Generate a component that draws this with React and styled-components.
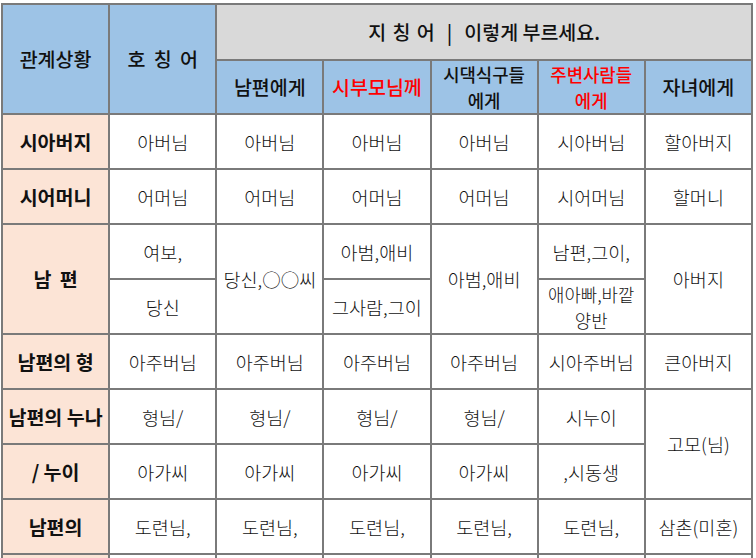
import React from "react";
import styled, { createGlobalStyle } from "styled-components";

const Global = createGlobalStyle`
  html, body { margin: 0; padding: 0; background: #ffffff; }
  body { font-family: "Noto Sans CJK KR", "Noto Sans", sans-serif; }
`;

const Page = styled.div`
  padding: 3px 0 0 1px;
`;

const Table = styled.table`
  border-collapse: collapse;
  table-layout: fixed;
  width: 752px;
`;

const Col = styled.col`
  width: 107px;
`;

const Row = styled.tr`
  height: ${(p) => p.$h || 55}px;
`;

const Cell = styled.td`
  border: 2px solid #7a7a7a;
  padding: 0;
  text-align: center;
  vertical-align: middle;
  font-size: 18.5px;
  line-height: 26px;
  color: #111;
  white-space: nowrap;
  background: ${(p) =>
    p.$tone === "blue" ? "#9dc3e6" : p.$tone === "gray" ? "#d9d9d9" : p.$tone === "peach" ? "#fce4d6" : "#ffffff"};
  font-weight: ${(p) => (p.$bold ? 700 : p.$head ? 500 : 300)};
  ${(p) => (p.$head || p.$bold) && "font-size: 19.5px;"}
  ${(p) => p.$tight && "font-size: 17.8px; line-height: 26px;"}
`;

const Red = styled.span`
  color: #ff0000;
`;

const Gap = styled.span`
  display: inline-block;
  width: ${(p) => p.$w}px;
`;

const rows = [
  ["시아버지", "아버님", "아버님", "아버님", "아버님", "시아버님", "할아버지"],
  ["시어머니", "어머님", "어머님", "어머님", "어머님", "시어머님", "할머니"],
];

export default function App() {
  return (
    <>
      <Global />
      <Page>
        <Table>
          <colgroup>
            {Array.from({ length: 7 }).map((_, i) => (
              <Col key={i} />
            ))}
          </colgroup>
          <tbody>
            <Row $h={56}>
              <Cell $tone="blue" $head rowSpan={2}>관계상황</Cell>
              <Cell $tone="blue" $head rowSpan={2}>
                호<Gap $w={4} /> 칭<Gap $w={4} /> 어
              </Cell>
              <Cell $tone="gray" $head colSpan={5}>
                지<Gap $w={2} /> 칭<Gap $w={2} /> 어<Gap $w={12} />|<Gap $w={12} />이렇게 부르세요.
              </Cell>
            </Row>
            <Row $h={54}>
              <Cell $tone="blue" $head>남편에게</Cell>
              <Cell $tone="blue" $head><Red>시부모님께</Red></Cell>
              <Cell $tone="blue" $head $tight>시댁식구들<br />에게</Cell>
              <Cell $tone="blue" $head $tight><Red>주변사람들<br />에게</Red></Cell>
              <Cell $tone="blue" $head>자녀에게</Cell>
            </Row>
            {rows.map((r) => (
              <Row key={r[0]}>
                <Cell $tone="peach" $bold>{r[0]}</Cell>
                {r.slice(1).map((t, i) => (
                  <Cell key={i}>{t}</Cell>
                ))}
              </Row>
            ))}
            <Row>
              <Cell $tone="peach" $bold rowSpan={2}>남<Gap $w={4} /> 편</Cell>
              <Cell>여보,</Cell>
              <Cell rowSpan={2}>당신,○○씨</Cell>
              <Cell>아범,애비</Cell>
              <Cell rowSpan={2}>아범,애비</Cell>
              <Cell>남편,그이,</Cell>
              <Cell rowSpan={2}>아버지</Cell>
            </Row>
            <Row>
              <Cell>당신</Cell>
              <Cell>그사람,그이</Cell>
              <Cell $tight>애아빠,바깥<br />양반</Cell>
            </Row>
            <Row>
              <Cell $tone="peach" $bold>남편의 형</Cell>
              <Cell>아주버님</Cell>
              <Cell>아주버님</Cell>
              <Cell>아주버님</Cell>
              <Cell>아주버님</Cell>
              <Cell>시아주버님</Cell>
              <Cell>큰아버지</Cell>
            </Row>
            <Row>
              <Cell $tone="peach" $bold>남편의 누나</Cell>
              <Cell>형님/</Cell>
              <Cell>형님/</Cell>
              <Cell>형님/</Cell>
              <Cell>형님/</Cell>
              <Cell>시누이</Cell>
              <Cell rowSpan={2}>고모(님)</Cell>
            </Row>
            <Row>
              <Cell $tone="peach" $bold>/ 누이</Cell>
              <Cell>아가씨</Cell>
              <Cell>아가씨</Cell>
              <Cell>아가씨</Cell>
              <Cell>아가씨</Cell>
              <Cell>,시동생</Cell>
            </Row>
            <Row>
              <Cell $tone="peach" $bold>남편의</Cell>
              <Cell>도련님,</Cell>
              <Cell>도련님,</Cell>
              <Cell>도련님,</Cell>
              <Cell>도련님,</Cell>
              <Cell>도련님,</Cell>
              <Cell>삼촌(미혼)</Cell>
            </Row>
            <Row>
              <Cell $tone="peach" $bold>&nbsp;</Cell>
              <Cell />
              <Cell />
              <Cell />
              <Cell />
              <Cell />
              <Cell />
            </Row>
          </tbody>
        </Table>
      </Page>
    </>
  );
}
